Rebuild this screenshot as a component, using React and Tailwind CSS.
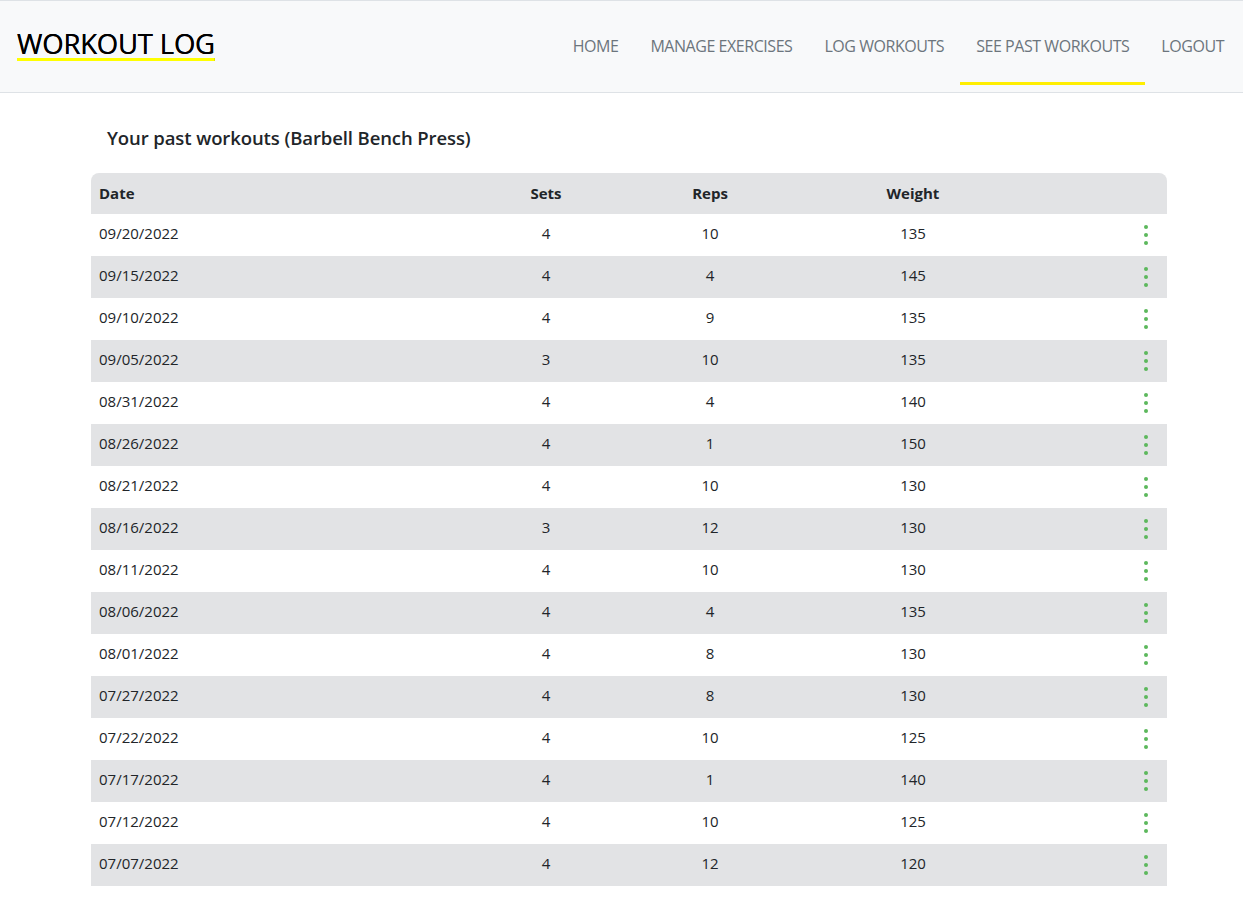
import React from "react";

const rows = [
  ["09/20/2022", 4, 10, 135],
  ["09/15/2022", 4, 4, 145],
  ["09/10/2022", 4, 9, 135],
  ["09/05/2022", 3, 10, 135],
  ["08/31/2022", 4, 4, 140],
  ["08/26/2022", 4, 1, 150],
  ["08/21/2022", 4, 10, 130],
  ["08/16/2022", 3, 12, 130],
  ["08/11/2022", 4, 10, 130],
  ["08/06/2022", 4, 4, 135],
  ["08/01/2022", 4, 8, 130],
  ["07/27/2022", 4, 8, 130],
  ["07/22/2022", 4, 10, 125],
  ["07/17/2022", 4, 1, 140],
  ["07/12/2022", 4, 10, 125],
  ["07/07/2022", 4, 12, 120],
  ["07/02/2022", 4, 10, 125],
];

const links = ["HOME", "MANAGE EXERCISES", "LOG WORKOUTS", "SEE PAST WORKOUTS", "LOGOUT"];

function Dots() {
  return (
    <div className="flex flex-col gap-[4px]">
      <span className="h-[4px] w-[4px] rounded-full bg-[#5cb85c]" />
      <span className="h-[4px] w-[4px] rounded-full bg-[#5cb85c]" />
      <span className="h-[4px] w-[4px] rounded-full bg-[#5cb85c]" />
    </div>
  );
}

const cols = "grid grid-cols-[400px_110px_218px_188px_160px] items-center";

export default function App() {
  return (
    <div className="min-h-screen bg-white text-[#212529] font-['Open_Sans',sans-serif]">
      <header className="flex h-[93px] items-center justify-between border-y border-[#dee2e6] bg-[#f8f9fa]">
        <div className="pl-[17px] pb-[5px]">
          <span className="text-[27.5px] leading-[30px] tracking-[-0.2px] text-[#000] underline decoration-[#ffff00] decoration-[3px] underline-offset-[4px] [text-shadow:0_0_0.4px_#000]">
            WORKOUT LOG
          </span>
        </div>
        <nav className="flex items-center pr-[3px]">
          {links.map((l) => (
            <a
              key={l}
              className={`flex h-[76px] items-center border-b-[3px] px-4 pt-[1px] text-[16px] tracking-[-0.45px] text-[#6c757d] ${
                l === "SEE PAST WORKOUTS" ? "border-[#ffee00]" : "border-transparent"
              }`}
            >
              {l}
            </a>
          ))}
        </nav>
      </header>

      <main className="ml-[91px] w-[1076px]">
        <h2 className="mt-[31px] mb-[22px] pl-4 text-[18.5px] leading-[27px] font-semibold tracking-[-0.1px]">
          Your past workouts (Barbell Bench Press)
        </h2>

        <div className="text-[15px]">
          <div className={`${cols} h-[41px] rounded-t-[8px] bg-[#e2e3e5] font-bold`}>
            <div className="pl-2">Date</div>
            <div className="text-center">Sets</div>
            <div className="text-center">Reps</div>
            <div className="text-center">Weight</div>
            <div />
          </div>
          {rows.map((r, i) => (
            <div
              key={r[0]}
              className={`${cols} h-[42px] ${i % 2 === 1 ? "bg-[#e2e3e5]" : "bg-white"}`}
            >
              <div className="pl-2 pb-[3px]">{r[0]}</div>
              <div className="text-center pb-[3px]">{r[1]}</div>
              <div className="text-center pb-[3px]">{r[2]}</div>
              <div className="text-center pb-[3px]">{r[3]}</div>
              <div className="flex justify-end pr-[19px]">
                <Dots />
              </div>
            </div>
          ))}
        </div>
      </main>
    </div>
  );
}
